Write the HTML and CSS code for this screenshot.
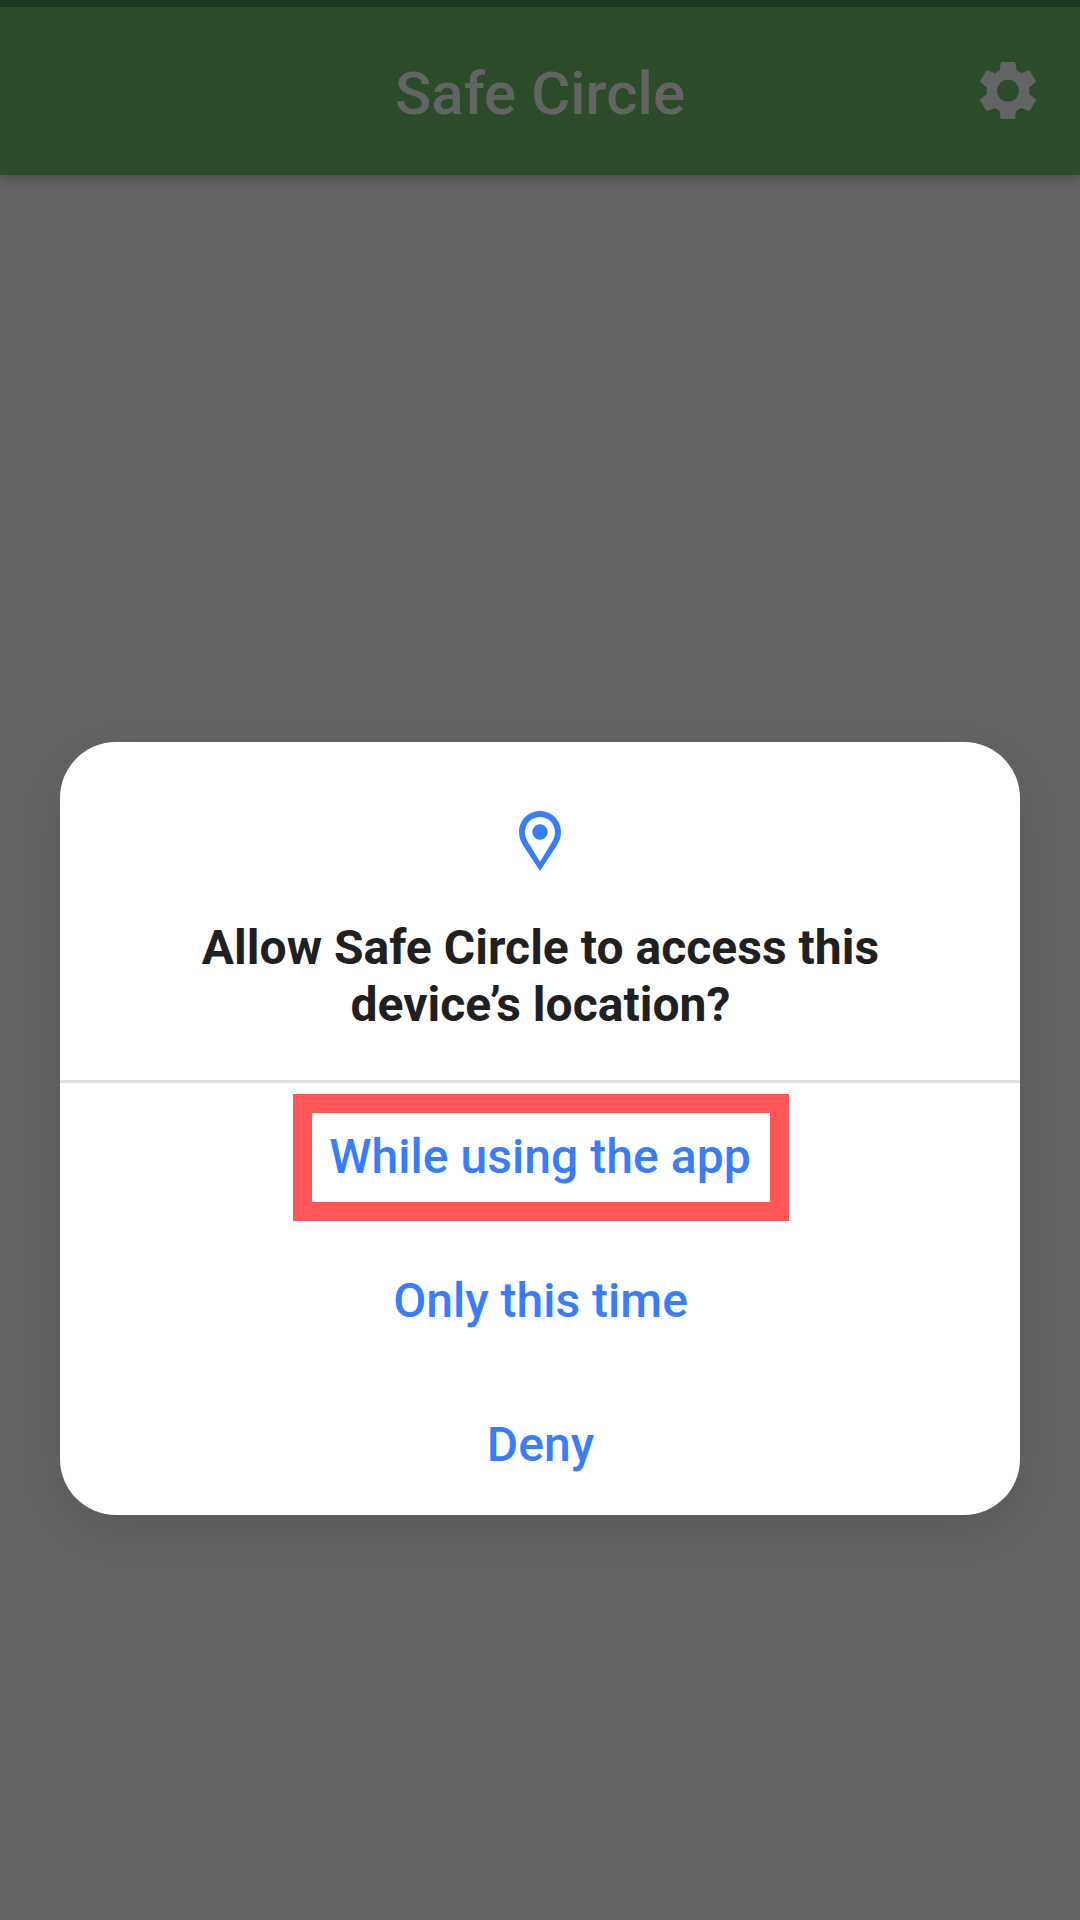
FILE: index.html
```html
<!DOCTYPE html>
<html lang="en">
<head>
<meta charset="utf-8">
<title>Safe Circle</title>
<link rel="stylesheet" href="styles.css">
</head>
<body>
<header class="app-bar">
  <h1 class="app-title">Safe Circle</h1>
  <svg class="gear" viewBox="180 186 168 173" role="img" aria-label="Settings"><path fill-rule="evenodd" d="M245 186H284Q286 186 286 188L290 211 304 220 325 211Q328 210 330 213L347 242Q349 245 346 247L328 262V282L346 297Q349 299 347 302L330 331Q328 334 325 333L304 324 288 333 285 357Q285 359 283 359H245Q243 359 242 357L239 333 225 324 203 333Q200 334 198 331L181 302Q179 299 182 297L200 282V262L182 247Q179 245 181 242L198 213Q200 210 203 211L225 220 239 211 242 188Q243 186 245 186ZM264 239A33 33 0 1 0 264 305A33 33 0 1 0 264 239Z"/></svg>
</header>
<main class="stage">
  <section class="dialog" role="dialog">
    <div class="prompt">
      <svg class="pin" viewBox="117 62 126 180" aria-hidden="true"><path fill-rule="evenodd" d="M180 62C145 62 117 90 117 125C117 142 122 153 132 169L180 242 228 169C238 153 243 142 243 125C243 90 215 62 180 62ZM180 80C205 80 225 100 225 125C225 138 220 149 212 162L180 214 148 162C140 149 135 138 135 125C135 100 155 80 180 80Z"/><circle cx="180" cy="125" r="23"/></svg>
      <h2 class="question">Allow Safe Circle to access this<br>device’s location?</h2>
    </div>
    <div class="choices">
      <button class="choice highlighted">While using the app</button>
      <button class="choice">Only this time</button>
      <button class="choice">Deny</button>
    </div>
  </section>
</main>
</body>
</html>
```
FILE: styles.css
```css
* { box-sizing: border-box; }
body {
  margin: 0;
  height: 1920px;
  overflow: hidden;
  display: flex;
  flex-direction: column;
  background: #646464;
  font-family: Roboto, "Liberation Sans", sans-serif;
}
.app-bar {
  height: 175px;
  flex: none;
  display: grid;
  grid-template-columns: 1fr auto 1fr;
  align-items: center;
  padding: 5px 44px 0;
  border-top: 7px solid #1f3820;
  background: #2b4b2b;
  box-shadow: 0 3px 12px rgba(0, 0, 0, .25);
}
.app-title {
  grid-column: 2;
  margin: 0;
  font-size: 60px;
  line-height: 70px;
  font-weight: 500;
  color: #646464;
}
.gear {
  width: 56px;
  height: 57.7px;
  justify-self: end;
  margin-top: -6px;
  fill: #646464;
}
.stage {
  flex: 1;
  padding: 566.5px 60px 0;
}
.dialog {
  height: 773.5px;
  border-radius: 56px;
  background: #fff;
  box-shadow: 0 16px 48px rgba(0, 0, 0, .11);
}
.prompt {
  height: 341.5px;
  display: flex;
  flex-direction: column;
  align-items: center;
  padding-top: 69px;
  border-bottom: 3px solid #e0e0e0;
}
.pin {
  width: 42px;
  height: 60px;
  fill: #377dff;
}
.question {
  margin: 48px 0 0 1px;
  font-size: 48px;
  line-height: 57px;
  font-weight: 700;
  letter-spacing: .03px;
  text-align: center;
  color: #202020;
}
.choices {
  display: flex;
  flex-direction: column;
  align-items: center;
  padding: 11px 0 0 1px;
  gap: 18px;
}
.choice {
  height: 126px;
  padding: 0 18px;
  border: 0 solid #ff5757;
  background: none;
  font: 500 48px/56px Roboto, "Liberation Sans", sans-serif;
  color: #377dff;
}
.highlighted {
  width: 496px;
  height: 127px;
  margin: 0 0 -1px 1px;
  padding: 0 19px 1px 17px;
  border-width: 19px;
  letter-spacing: .05px;
  white-space: nowrap;
}
```
